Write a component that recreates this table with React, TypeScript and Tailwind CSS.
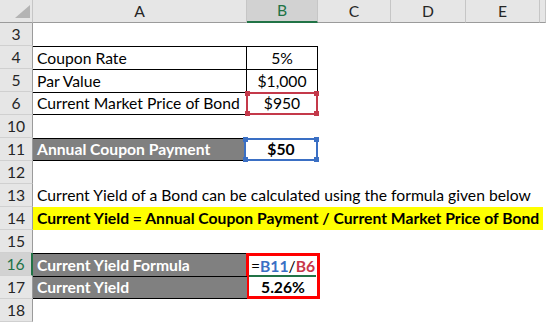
import React from "react";

function Hd({ children, sel }: { children?: React.ReactNode; sel?: boolean }) {
  return sel ? (
    <div className="flex items-center justify-center bg-[#d2d2d2] text-[#217346] border-r border-r-[#c6c6c6] border-b-2 border-b-[#217346]">
      {children}
    </div>
  ) : (
    <div className="flex items-center justify-center bg-[#e6e6e6] text-[#262626] border-r border-r-[#c6c6c6] border-b border-b-[#9b9b9b]">
      {children}
    </div>
  );
}

function RH({ n, sel }: { n: string; sel?: boolean }) {
  return sel ? (
    <div className="flex items-center justify-center bg-[#d2d2d2] text-[#217346] border-b border-b-[#d0d0d0] border-r-2 border-r-[#217346]">
      {n}
    </div>
  ) : (
    <div className="flex items-center justify-center bg-[#e6e6e6] text-[#262626] border-b border-b-[#d0d0d0] border-r border-r-[#9b9b9b]">
      {n}
    </div>
  );
}

function Blanks({ count }: { count: number }) {
  return (
    <>
      {Array.from({ length: count }).map((_, i) => (
        <div key={i} />
      ))}
    </>
  );
}

function Corners({ color }: { color: string }) {
  return (
    <>
      <span className="absolute -left-[3px] -top-[3px] w-[5px] h-[5px]" style={{ background: color }} />
      <span className="absolute -right-[3px] -top-[3px] w-[5px] h-[5px]" style={{ background: color }} />
      <span className="absolute -left-[3px] -bottom-[3px] w-[5px] h-[5px]" style={{ background: color }} />
      <span className="absolute -right-[3px] -bottom-[3px] w-[5px] h-[5px]" style={{ background: color }} />
    </>
  );
}

export default function App() {
  return (
    <div className="w-[546px] h-[322px] overflow-hidden bg-white font-['Lato',sans-serif] text-[15.7px] leading-[21px] text-black">
      <div className="grid grid-cols-[33px_214px_71px_73px_75px_74px_6px] grid-rows-[repeat(14,23px)]">
        {/* header */}
        <div className="bg-[#e6e6e6] border-r border-r-[#c6c6c6] border-b border-b-[#9b9b9b]">
          <svg width="32" height="22" viewBox="0 0 32 22">
            <polygon points="15,18 30,5 30,18" fill="#b4b4b4" />
          </svg>
        </div>
        <Hd>A</Hd>
        <Hd sel>B</Hd>
        <Hd>C</Hd>
        <Hd>D</Hd>
        <Hd>E</Hd>
        <Hd />

        {/* row 3 */}
        <RH n="3" />
        <Blanks count={6} />

        {/* row 4 */}
        <RH n="4" />
        <div className="flex items-center pl-[4px] border-t border-r border-black">Coupon Rate</div>
        <div className="flex items-center justify-center border-t border-r border-black">5%</div>
        <Blanks count={4} />

        {/* row 5 */}
        <RH n="5" />
        <div className="flex items-center pl-[4px] border-t border-r border-black">Par Value</div>
        <div className="flex items-center justify-center border-t border-r border-black">$1,000</div>
        <Blanks count={4} />

        {/* row 6 */}
        <RH n="6" />
        <div className="flex items-center pl-[4px] border-t border-b border-black whitespace-nowrap">
          Current Market Price of Bond
        </div>
        <div className="relative flex items-center justify-center border-2 border-[#c4394a] -ml-px">
          $950
          <Corners color="#c4394a" />
        </div>
        <Blanks count={4} />

        {/* row 10 */}
        <RH n="10" />
        <Blanks count={6} />

        {/* row 11 */}
        <RH n="11" />
        <div className="flex items-center pl-[4px] bg-[#808080] text-white font-bold border-t border-b border-black mr-[2px]">
          Annual Coupon Payment
        </div>
        <div className="relative flex items-center justify-center font-bold border-2 border-[#3a6fc4] -ml-[3px]">
          $50
          <Corners color="#3a6fc4" />
        </div>
        <Blanks count={4} />

        {/* row 12 */}
        <RH n="12" />
        <Blanks count={6} />

        {/* row 13 */}
        <RH n="13" />
        <div className="col-span-6 flex items-center pl-[4px] whitespace-nowrap">
          Current Yield of a Bond can be calculated using the formula given below
        </div>

        {/* row 14 */}
        <RH n="14" />
        <div className="col-span-6 flex items-center pl-[4px] bg-[#ffff00] font-bold whitespace-nowrap mr-[3px] overflow-hidden">
          Current Yield = Annual Coupon Payment / Current Market Price of Bond
        </div>

        {/* row 15 */}
        <RH n="15" />
        <Blanks count={6} />

        {/* row 16 */}
        <RH n="16" sel />
        <div className="flex items-center pl-[4px] bg-[#808080] text-white font-bold border-t border-black">
          Current Yield Formula
        </div>
        <div className="row-span-2 flex flex-col border-[3px] border-[#ff0000] -ml-[1px] -mr-[2px] font-bold">
          <div className="relative flex-1 flex items-center justify-center">
            <span className="font-normal">=</span>
            <span className="text-[#3a6fc4]">B11</span>
            <span className="font-normal">/</span>
            <span className="text-[#c8374a]">B6</span>
            <span className="absolute left-0 right-[1px] bottom-0 h-[2px] bg-[#217346]" />
          </div>
          <div className="flex-1 flex items-center justify-center">5.26%</div>
        </div>
        <Blanks count={4} />

        {/* row 17 */}
        <RH n="17" />
        <div className="flex items-center pl-[4px] bg-[#808080] text-white font-bold border-t border-b border-black">
          Current Yield
        </div>
        <Blanks count={4} />

        {/* row 18 */}
        <RH n="18" />
        <Blanks count={6} />
      </div>
    </div>
  );
}
